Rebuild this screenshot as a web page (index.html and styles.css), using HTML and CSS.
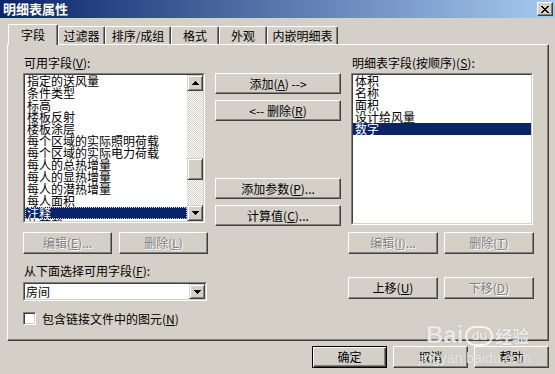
FILE: index.html
```html
<!DOCTYPE html>
<html lang="zh-CN">
<head>
    <meta charset="UTF-8">
    <title>明细表属性</title>
    <link rel="stylesheet" href="styles.css">
</head>
<body>
    <div class="titlebar">
        <span class="title">明细表属性</span>
        <span class="close">
            <svg width="8" height="7" viewBox="0 0 8 7"><path d="M0 0h2l2 2.5L6 0h2L5 3.5 8 7H6L4 4.5 2 7H0l3-3.5z"/></svg>
        </span>
    </div>

    <!-- Abas -->
    <div class="tabs">
        <div class="tab active" style="width:50px">字段</div>
        <div class="tab" style="width:47px">过滤器</div>
        <div class="tab" style="width:66px">排序/成组</div>
        <div class="tab" style="width:48px">格式</div>
        <div class="tab" style="width:48px">外观</div>
        <div class="tab" style="width:71px">内嵌明细表</div>
    </div>

    <div class="panel">
        <div class="col col-left">
            <div class="label">可用字段(<u>V</u>):</div>
            <div class="listbox list-left">
                <div class="list-inner">
                    <ul class="items">
                        <li>指定的送风量</li>
                        <li>条件类型</li>
                        <li>标高</li>
                        <li>楼板反射</li>
                        <li>楼板涂层</li>
                        <li>每个区域的实际照明荷载</li>
                        <li>每个区域的实际电力荷载</li>
                        <li>每人的总热增量</li>
                        <li>每人的显热增量</li>
                        <li>每人的潜热增量</li>
                        <li>每人面积</li>
                        <li class="selected focus">注释</li>
                        <li>热荷载</li>
                    </ul>
                    <div class="scrollbar">
                        <div class="sb-btn">
                            <svg width="7" height="4" viewBox="0 0 7 4"><path d="M0 4h7L3.5 0z"/></svg>
                        </div>
                        <div class="sb-track"><div class="sb-thumb"></div></div>
                        <div class="sb-btn">
                            <svg width="7" height="4" viewBox="0 0 7 4"><path d="M0 0h7L3.5 4z"/></svg>
                        </div>
                    </div>
                </div>
            </div>
            <div class="btn-row">
                <button class="btn" disabled>编辑(<u>E</u>)...</button>
                <button class="btn" disabled>删除(<u>L</u>)</button>
            </div>
            <div class="label label-select">从下面选择可用字段(<u>F</u>):</div>
            <div class="combo">
                <div class="combo-inner">
                    <span class="combo-text">房间</span>
                    <div class="sb-btn combo-btn">
                        <svg width="7" height="4" viewBox="0 0 7 4"><path d="M0 0h7L3.5 4z"/></svg>
                    </div>
                </div>
            </div>
            <div class="check">
                <span class="check-box"></span>
                <span>包含链接文件中的图元(<u>N</u>)</span>
            </div>
        </div>

        <div class="col col-mid">
            <button class="btn">添加(<u>A</u>) --&gt;</button>
            <button class="btn">&lt;-- 删除(<u>R</u>)</button>
            <button class="btn btn-gap">添加参数(<u>P</u>)...</button>
            <button class="btn">计算值(<u>C</u>)...</button>
        </div>

        <div class="col col-right">
            <div class="label">明细表字段(按顺序)(<u>S</u>):</div>
            <div class="listbox list-right">
                <div class="list-inner">
                    <ul class="items">
                        <li>体积</li>
                        <li>名称</li>
                        <li>面积</li>
                        <li>设计给风量</li>
                        <li class="selected">数字</li>
                    </ul>
                </div>
            </div>
            <div class="btn-row">
                <button class="btn" disabled>编辑(<u>I</u>)...</button>
                <button class="btn" disabled>删除(<u>T</u>)</button>
            </div>
            <div class="btn-row btn-row-move">
                <button class="btn">上移(<u>U</u>)</button>
                <button class="btn" disabled>下移(<u>D</u>)</button>
            </div>
        </div>
    </div>

    <div class="footer">
        <button class="btn btn-default">确定</button>
        <button class="btn">取消</button>
        <button class="btn">帮助</button>
    </div>

    <!-- marca d'água -->
    <div class="watermark">
        <div class="wm-logo"><span class="wm-bai">Bai</span><span class="wm-paw">du</span><span class="wm-cn">经验</span></div>
        <div class="wm-url">jingyan.baidu.com</div>
    </div>
</body>
</html>
```

FILE: styles.css
```css
* {
    box-sizing: border-box;
}

body {
    margin: 0;
    width: 555px;
    height: 374px;
    overflow: hidden;
    position: relative;
    background-color: #d4d0c8;
    font-family: "Noto Sans CJK SC", "Liberation Sans", sans-serif;
    font-size: 12px;
    color: #000;
}

u {
    text-decoration: underline;
}

.titlebar {
    height: 18px;
    display: flex;
    align-items: center;
    justify-content: space-between;
    padding: 0 2px 0 3px;
    background: linear-gradient(to right, #0a246a, #a6caf0);
}

.title {
    color: #fff;
    font-weight: bold;
    font-size: 13px;
    line-height: 18px;
}

.close {
    width: 16px;
    height: 14px;
    display: flex;
    align-items: center;
    justify-content: center;
    background-color: #d4d0c8;
    border: 1px solid;
    border-color: #fff #404040 #404040 #fff;
    box-shadow: inset -1px -1px #808080;
}

.tabs {
    display: flex;
    align-items: flex-end;
    height: 21px;
    margin: 6px 0 -1px 8px;
    position: relative;
    z-index: 1;
}

.tab {
    height: 18px;
    margin-bottom: 1px;
    display: flex;
    justify-content: center;
    padding-top: 3px;
    line-height: 12px;
    background-color: #d4d0c8;
    border-top: 1px solid #fff;
    border-left: 1px solid #fff;
    border-right: 1px solid #404040;
    border-radius: 2px 2px 0 0;
    box-shadow: inset -1px 0 #808080;
}

.tab.active {
    height: 21px;
    margin-bottom: 0;
    padding-top: 4px;
}

.panel {
    margin-left: 7px;
    width: 542px;
    height: 297px;
    display: flex;
    gap: 7px;
    padding: 12px 0 0 15px;
    border-top: 1px solid #fff;
    border-left: 1px solid #fff;
    border-right: 1px solid #404040;
    border-bottom: 1px solid #404040;
    box-shadow: inset -1px -1px #808080;
}

.col {
    display: flex;
    flex-direction: column;
}

.col-left {
    width: 185px;
}

.col-mid {
    width: 126px;
    padding-top: 16px;
    gap: 6px;
}

.col-right {
    width: 186px;
}

.label {
    height: 12px;
    line-height: 12px;
    margin: 0 0 4px 1px;
}

.col-right .label {
    margin-left: 4px;
}

.label-select {
    margin-top: 11px;
    margin-bottom: 5px;
}

/* caixas de lista afundadas */
.listbox {
    width: 182px;
    background-color: #fff;
    border: 1px solid;
    border-color: #808080 #fff #fff #808080;
}

.list-left {
    height: 150px;
}

.list-right {
    height: 152px;
    margin-left: 3px;
}

.list-inner {
    height: 100%;
    display: flex;
    border: 1px solid;
    border-color: #404040 #d4d0c8 #d4d0c8 #404040;
    overflow: hidden;
}

.items {
    flex: 1;
    list-style: none;
    margin: 0;
    padding: 0;
    overflow: hidden;
}

.items li {
    height: 12px;
    line-height: 12px;
    padding-left: 2px;
    white-space: nowrap;
}

.items li.selected {
    background-color: #0a246a;
    color: #fff;
}

.items li.focus {
    outline: 1px dotted #d4d0c8;
    outline-offset: -1px;
}

.scrollbar {
    width: 16px;
    display: flex;
    flex-direction: column;
}

.sb-btn {
    width: 16px;
    height: 16px;
    flex-shrink: 0;
    display: flex;
    align-items: center;
    justify-content: center;
    background-color: #d4d0c8;
    border: 1px solid;
    border-color: #d4d0c8 #404040 #404040 #d4d0c8;
    box-shadow: inset 1px 1px #fff, inset -1px -1px #808080;
}

.sb-btn svg,
.close svg {
    shape-rendering: crispEdges;
}

.sb-track {
    flex: 1;
    background: repeating-conic-gradient(#fff 0 25%, #d4d0c8 0 50%) 0 0 / 2px 2px;
}

.sb-thumb {
    height: 22px;
    margin-top: 67px;
    background-color: #d4d0c8;
    border: 1px solid;
    border-color: #d4d0c8 #404040 #404040 #d4d0c8;
    box-shadow: inset 1px 1px #fff, inset -1px -1px #808080;
}

/* botões */
.btn {
    font-family: inherit;
    font-size: 12px;
    color: #000;
    height: 21px;
    padding: 0;
    line-height: 12px;
    background-color: #d4d0c8;
    border: 1px solid;
    border-color: #fff #404040 #404040 #fff;
    box-shadow: inset -1px -1px #808080;
}

.btn:disabled {
    color: #808080;
    text-shadow: 1px 1px #fff;
}

.btn-gap {
    margin-top: 51px;
}

.btn-row {
    display: flex;
    gap: 7px;
    margin-top: 9px;
}

.btn-row .btn {
    width: 89px;
    height: 22px;
}

.col-right .btn-row {
    gap: 6px;
    margin-top: 7px;
}

.col-right .btn-row .btn {
    width: 90px;
}

.col-right .btn-row-move {
    margin-top: 23px;
}

.combo {
    width: 184px;
    height: 19px;
    background-color: #fff;
    border: 1px solid;
    border-color: #808080 #fff #fff #808080;
}

.combo-inner {
    height: 100%;
    display: flex;
    align-items: center;
    justify-content: space-between;
    border: 1px solid;
    border-color: #404040 #d4d0c8 #d4d0c8 #404040;
    padding-left: 1px;
}

.combo-btn {
    height: 15px;
}

.check {
    display: flex;
    align-items: center;
    gap: 6px;
    margin-top: 11px;
    height: 13px;
    line-height: 12px;
}

.check-box {
    width: 13px;
    height: 13px;
    background-color: #fff;
    border: 1px solid;
    border-color: #808080 #fff #fff #808080;
    box-shadow: inset 1px 1px #404040, inset -1px -1px #d4d0c8;
}

.footer {
    display: flex;
    justify-content: flex-end;
    gap: 6px;
    margin-top: 5px;
    padding-right: 6px;
}

.footer .btn {
    width: 75px;
    height: 22px;
}

.btn-default {
    border: 1px solid #000;
    box-shadow: inset 1px 1px #fff, inset -1px -1px #404040, inset -2px -2px #808080;
}

/* marca d'água sobreposta */
.watermark {
    position: absolute;
    left: 418px;
    top: 313px;
    width: 120px;
    color: rgba(255, 255, 255, 0.8);
    text-shadow: 0 0 1px rgba(120, 120, 120, 0.6);
    pointer-events: none;
}

.wm-logo {
    display: flex;
    align-items: flex-end;
    height: 33px;
    padding-left: 8px;
}

.wm-bai {
    font-family: "Liberation Sans", sans-serif;
    font-weight: bold;
    font-size: 24px;
    line-height: 22px;
}

.wm-paw {
    width: 28px;
    height: 20px;
    margin: 0 2px;
    border-radius: 10px;
    border: 2px solid rgba(255, 255, 255, 0.8);
    font-family: "Liberation Sans", sans-serif;
    font-weight: bold;
    font-size: 13px;
    line-height: 16px;
    text-align: center;
}

.wm-cn {
    font-size: 17px;
    font-weight: bold;
    line-height: 20px;
}

.wm-url {
    font-family: "Liberation Sans", sans-serif;
    font-size: 14px;
    line-height: 16px;
    margin-top: 4px;
}
```
